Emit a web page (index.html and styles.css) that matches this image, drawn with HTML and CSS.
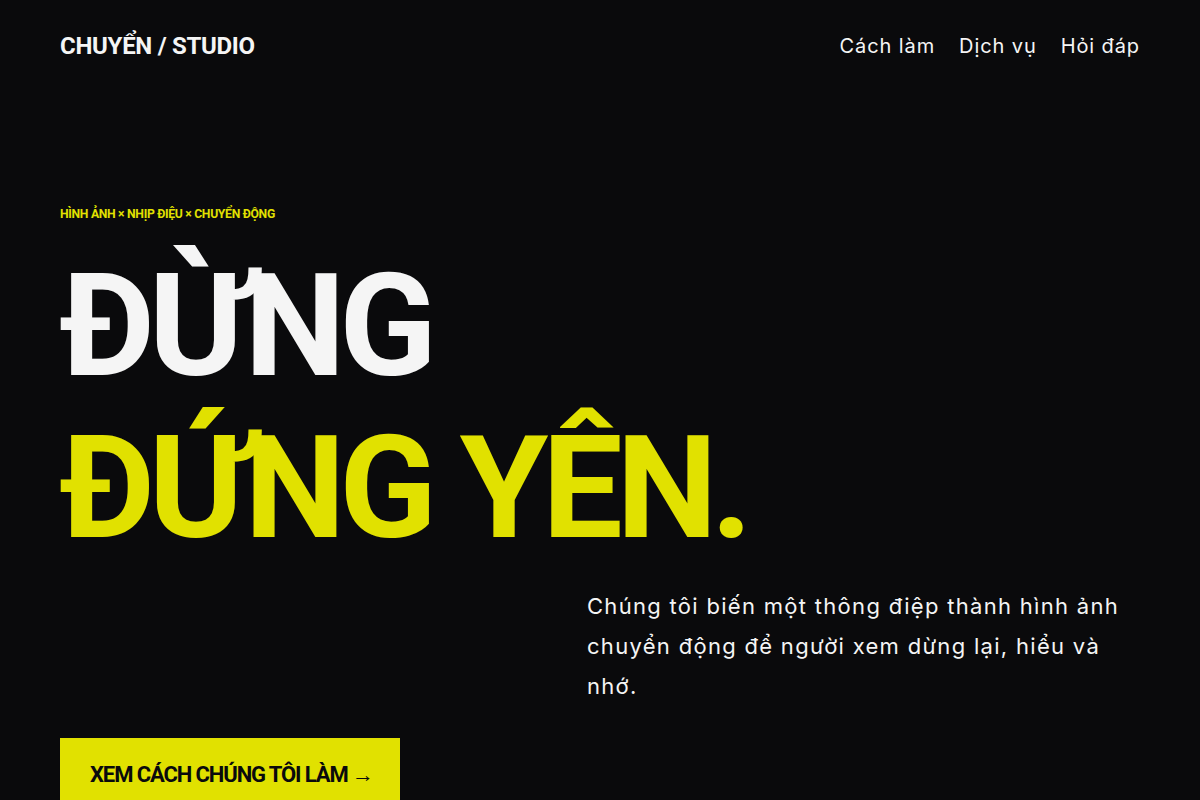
FILE: index.html
```html
<!DOCTYPE html>
<html lang="vi">
  <head>
    <meta charset="UTF-8" />
    <meta name="viewport" content="width=device-width, initial-scale=1.0" />
    <title>Chuyển / Studio</title>
    <link rel="stylesheet" href="styles.css">
  </head>
  <body>
    <header class="header">
      <a class="logo" href="#">CHUYỂN / STUDIO</a>
      <nav class="nav">
        <a href="#">Cách làm</a>
        <a href="#">Dịch vụ</a>
        <a href="#">Hỏi đáp</a>
      </nav>
    </header>
    <main class="hero">
      <p class="eyebrow">HÌNH ẢNH × NHỊP ĐIỆU × CHUYỂN ĐỘNG</p>
      <h1 class="title">
        <span class="line">ĐỪNG</span>
        <span class="line accent">ĐỨNG YÊN.</span>
      </h1>
      <p class="lead">Chúng tôi biến một thông điệp thành hình ảnh chuyển động để người xem dừng lại, hiểu và nhớ.</p>
      <a class="cta" href="#">XEM CÁCH CHÚNG TÔI LÀM →</a>
    </main>
  </body>
</html>
```

FILE: styles.css
```css
body {
  margin: 0;
  background: #0a0a0c;
  color: #f5f5f5;
  font-family: Inter, "Noto Sans", sans-serif;
}
a {
  color: inherit;
  text-decoration: none;
}
.header {
  display: flex;
  justify-content: space-between;
  align-items: center;
  padding: 30px 60px 0;
  height: 32px;
}
.logo {
  font-family: Roboto, sans-serif;
  font-weight: 700;
  font-size: 24px;
  letter-spacing: -0.3px;
}
.nav {
  display: flex;
  gap: 24px;
  font-size: 20px;
  letter-spacing: 0.9px;
}
.hero {
  padding: 0 60px;
}
.eyebrow {
  margin: 145px 0 0;
  font-family: Roboto, sans-serif;
  font-weight: 700;
  font-size: 12.2px;
  letter-spacing: -0.3px;
  color: #e1e100;
}
.title {
  margin: 24px 0 0;
  font-family: Roboto, sans-serif;
  font-weight: 700;
  font-size: 143px;
  line-height: 162px;
  letter-spacing: -6.2px;
}
.line {
  display: block;
}
.accent {
  color: #e1e100;
}
.lead {
  max-width: 553px;
  margin: 17px 0 0 auto;
  font-size: 22px;
  line-height: 40px;
  letter-spacing: 1.3px;
}
.cta {
  display: inline-block;
  margin-top: 32px;
  padding: 24px 27px 40px 30px;
  background: #e1e100;
  color: #0a0a0c;
  font-family: Roboto, sans-serif;
  font-weight: 700;
  font-size: 22px;
  letter-spacing: -1.1px;
}
```
